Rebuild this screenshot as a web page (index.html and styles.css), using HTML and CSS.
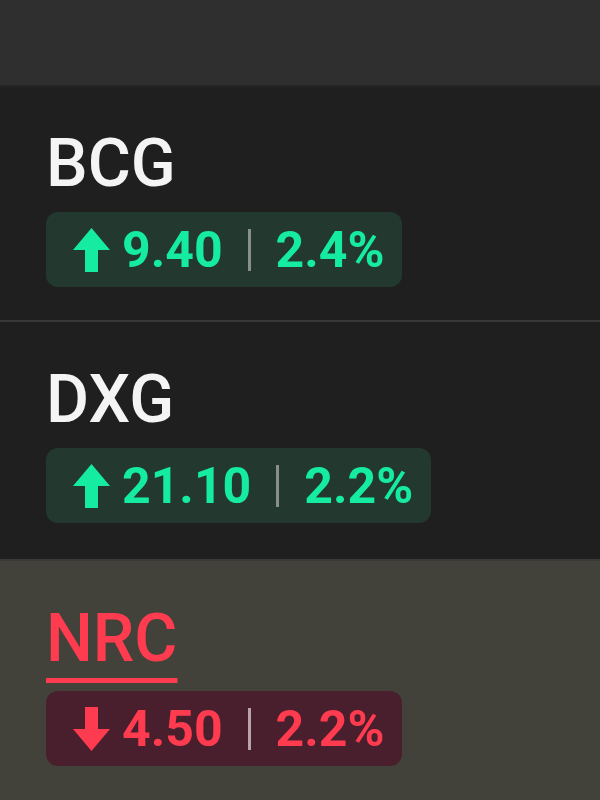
FILE: index.html
```html
<!DOCTYPE html>
<html>
<head lang="en">
    <meta charset="UTF-8">
    <title>Watchlist</title>
    <link rel="stylesheet" href="styles.css">
</head>
<body>
<div class="header"></div>

<div class="row first">
    <div class="symbol">BCG</div>
    <div class="badge up">
        <svg class="arrow" width="37" height="44" viewBox="0 0 37 44"><polygon points="18.5,0 37,22 25,22 25,44 12,44 12,22 0,22"/></svg>
        <span class="num">9.40</span>
        <span class="sep"></span>
        <span class="num">2.4%</span>
    </div>
</div>

<div class="row second">
    <div class="symbol">DXG</div>
    <div class="badge up">
        <svg class="arrow" width="37" height="44" viewBox="0 0 37 44"><polygon points="18.5,0 37,22 25,22 25,44 12,44 12,22 0,22"/></svg>
        <span class="num">21.10</span>
        <span class="sep"></span>
        <span class="num">2.2%</span>
    </div>
</div>

<div class="row active">
    <div class="symbol down-text">NRC</div>
    <div class="badge down">
        <svg class="arrow" width="37" height="44" viewBox="0 0 37 44"><polygon points="12,0 25,0 25,22 37,22 18.5,44 0,22 12,22"/></svg>
        <span class="num">4.50</span>
        <span class="sep"></span>
        <span class="num">2.2%</span>
    </div>
</div>
</body>
</html>
```

FILE: styles.css
```css
*{
    margin: 0;
    padding: 0;
}
body{
    background: #43423a;
    font-family: Roboto, "Liberation Sans", sans-serif;
}
.header{
    height: 85px;
    background: #2f2f2f;
}
.row{
    background: #1f1f1f;
    border-top: 2px solid #383838;
    padding: 39px 46px 33px;
}
.row.first{
    border-top-color: #252525;
    padding-top: 38px;
}
.row.second{
    padding-bottom: 36px;
}
.row.active{
    background: #43423a;
    border-top-color: #3a3a37;
    padding-top: 39px;
    padding-bottom: 0;
}
.symbol{
    font-size: 66px;
    font-weight: 500;
    line-height: 77px;
    color: #f4f4f4;
    margin-bottom: 10px;
}
.symbol.down-text{
    color: #ff3b4f;
    display: inline-block;
    text-decoration: underline;
    text-decoration-thickness: 5px;
    text-underline-offset: 17px;
    margin-bottom: 14px;
}
.badge{
    display: flex;
    width: fit-content;
    align-items: center;
    height: 75px;
    padding: 0 18px 0 27px;
    border-radius: 12px;
    font-size: 50px;
    font-weight: 700;
}
.badge.up{
    background: #23392f;
    color: #16eba2;
}
.badge.down{
    background: #4a1f2d;
    color: #ff3b4f;
}
.arrow{
    fill: currentColor;
    margin-right: 12px;
}
.sep{
    width: 3px;
    height: 42px;
    margin: 0 25px;
    background: #8a8f8c;
}
.badge.down .sep{
    background: #b9a3aa;
}
```
